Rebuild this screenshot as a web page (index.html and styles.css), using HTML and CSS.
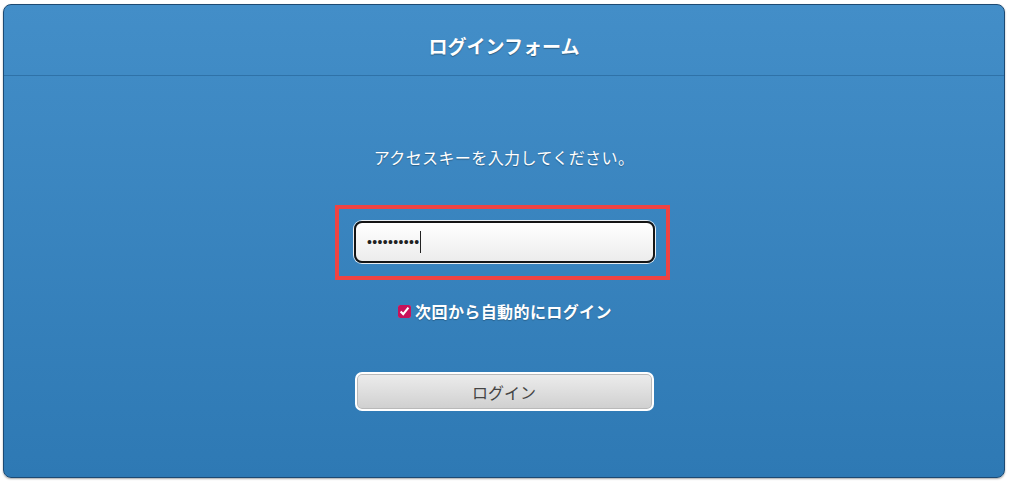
FILE: index.html
```html
<!DOCTYPE html>
<html lang="ja">
<head>
<meta charset="utf-8">
<title>ログインフォーム</title>
<link rel="stylesheet" href="styles.css">
</head>
<body>
<div class="panel">
  <div class="panel-header">
    <h1 class="title">ログインフォーム</h1>
  </div>
  <div class="panel-body">
    <p class="prompt">アクセスキーを入力してください。</p>
    <div class="highlight">
      <div class="field" role="textbox" aria-label="アクセスキー"><span class="dots">••••••••••</span><span class="caret"></span></div>
    </div>
    <label class="remember"><input type="checkbox" class="check" checked><span>次回から自動的にログイン</span></label>
    <button class="btn" type="button">ログイン</button>
  </div>
</div>
</body>
</html>
```

FILE: styles.css
```css
html, body {
  margin: 0;
  padding: 0;
  background: #ffffff;
  height: 484px;
  overflow: hidden;
}
body {
  font-family: "Noto Sans CJK JP", "Noto Sans", "Liberation Sans", sans-serif;
}
.panel {
  margin: 4px 4px 0 3px;
  height: 474px;
  box-sizing: border-box;
  border: 1px solid #1d4a73;
  border-radius: 8px;
  background: linear-gradient(to bottom, #438ec8 0%, #2e79b4 100%);
  box-shadow: 0 1px 2px rgba(0, 0, 0, 0.35);
  display: flex;
  flex-direction: column;
}
.panel-header {
  padding: 29px 0 17px;
  border-bottom: 1px solid #2f72a8;
  text-align: center;
}
.title {
  margin: 0;
  font-size: 19px;
  line-height: 24px;
  font-weight: 700;
  color: #ffffff;
  text-shadow: 0 1px 1px rgba(0, 0, 0, 0.35);
}
.panel-body {
  display: flex;
  flex-direction: column;
  align-items: center;
}
.prompt {
  margin: 69px 0 0;
  font-size: 16px;
  line-height: 24px;
  letter-spacing: 0.4px;
  color: #ffffff;
  text-shadow: 0 1px 1px rgba(0, 0, 0, 0.3);
}
.highlight {
  margin-top: 36px;
  margin-left: -3px;
  border: 4px solid #ef4343;
  padding: 12px 11px 13px 15px;
}
.field {
  width: 301px;
  height: 42px;
  box-sizing: border-box;
  border: 2px solid #151515;
  border-radius: 8px;
  box-shadow: 0 0 0 1px #e9eef3;
  background: linear-gradient(to bottom, #ffffff 0%, #f6f6f6 50%, #ececec 100%);
  display: flex;
  align-items: center;
  padding-left: 11px;
}
.dots {
  font-family: "Liberation Sans", sans-serif;
  font-size: 14px;
  letter-spacing: 0.35px;
  color: #222222;
  line-height: 20px;
}
.caret {
  width: 1px;
  height: 22px;
  background: #222222;
}
.remember {
  margin-top: 19px;
  margin-left: 2px;
  display: flex;
  align-items: center;
  font-size: 16px;
  line-height: 24px;
  font-weight: 700;
  letter-spacing: 0.4px;
  color: #ffffff;
  text-shadow: 0 1px 1px rgba(0, 0, 0, 0.25);
}
.check {
  margin: 0 4px 0 0;
  width: 13px;
  height: 13px;
  accent-color: #c8125a;
}
.btn {
  margin-top: 49px;
  width: 299px;
  height: 39px;
  box-sizing: border-box;
  border: 2px solid #ffffff;
  border-radius: 7px;
  box-shadow: inset 0 0 0 1px #b9b9b9;
  background: linear-gradient(to bottom, #ececec 0%, #dedede 50%, #cfcfcf 100%);
  font-family: "Noto Sans CJK JP", "Noto Sans", "Liberation Sans", sans-serif;
  font-size: 16px;
  color: #444444;
  padding: 0;
}
```
